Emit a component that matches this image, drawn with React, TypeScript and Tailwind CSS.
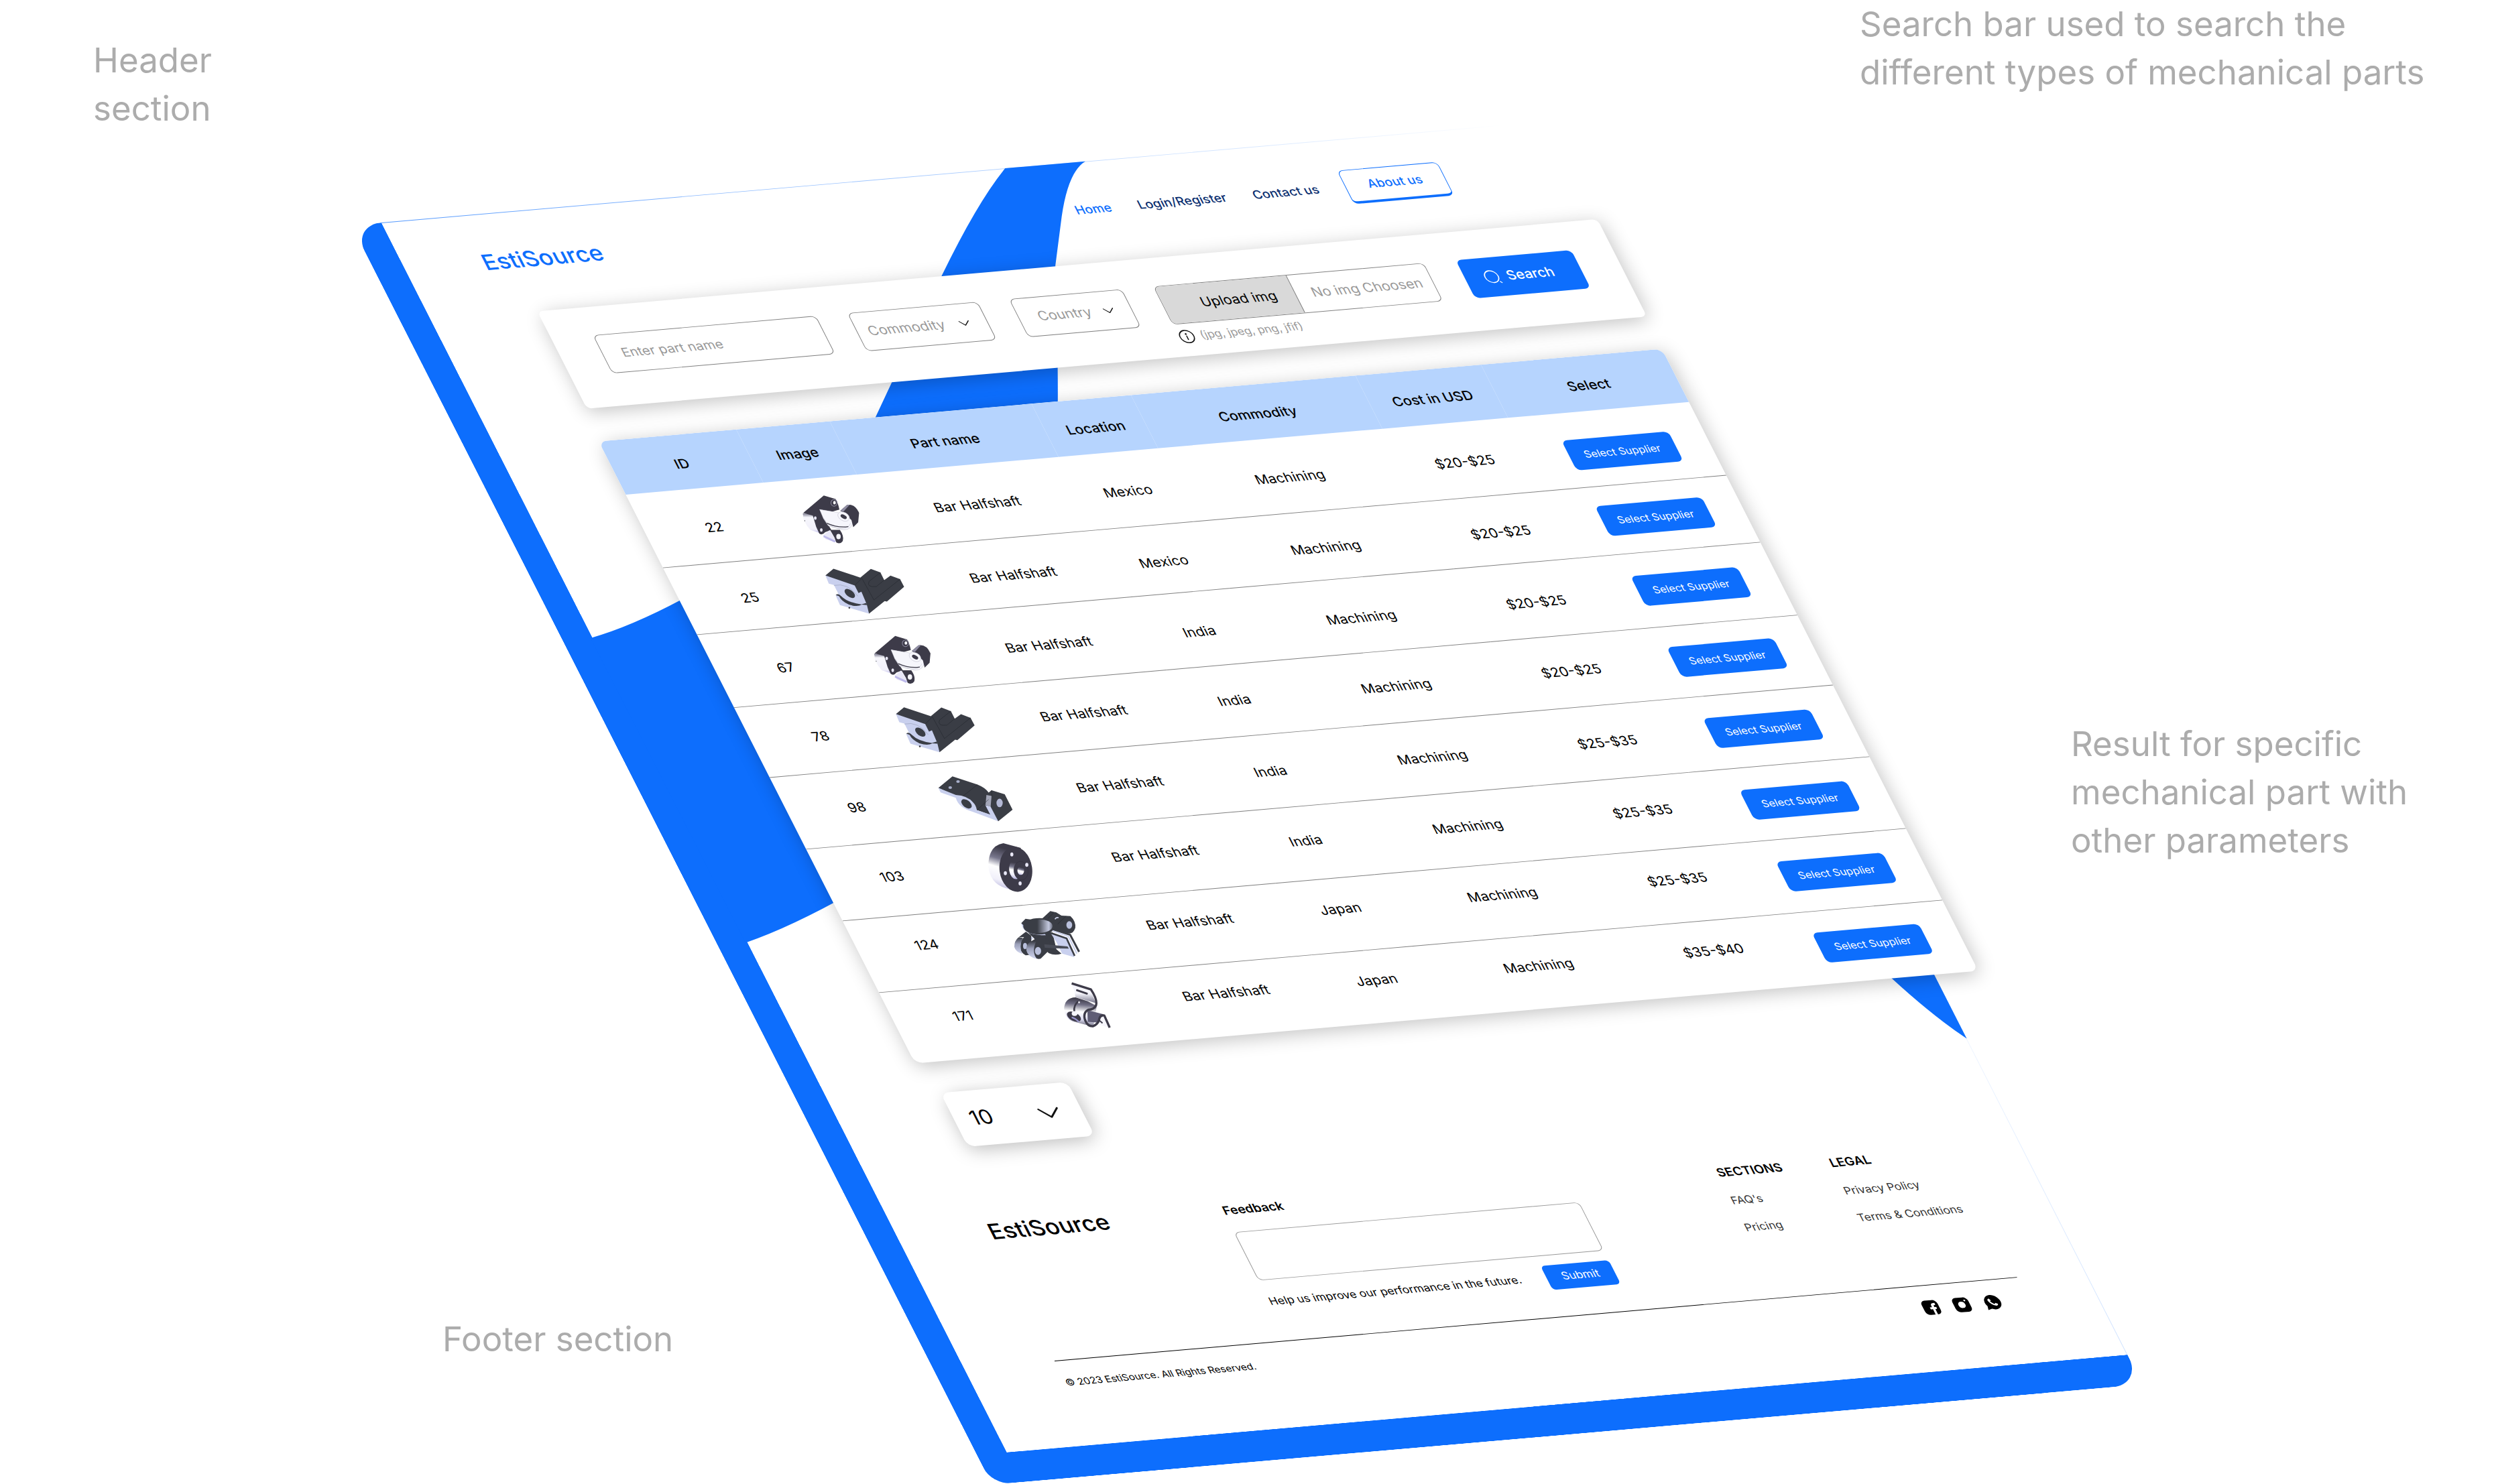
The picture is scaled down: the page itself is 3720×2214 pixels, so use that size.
import React from "react";

const INK = "#3a3d45";
const INK_WARM = "#3d3b49";
const PALE = "#c9d0ee";

function PartFrame({ viewBox, children }: { viewBox: string; children: React.ReactNode }) {
  return (
    <svg
      viewBox={viewBox}
      aria-hidden="true"
      className="mx-auto block size-[90px] overflow-visible [transform:matrix(0.9613,0.0935,-0.4888,1.0743,0,0)]"
    >
      {children}
    </svg>
  );
}

function HingeClamp({ id }: { id: string }) {
  return (
    <PartFrame viewBox="44 25 270 270">
      <defs>
        <linearGradient id={id} x1="0" y1="0" x2="0" y2="1">
          <stop offset="0" stopColor="#77768c" />
          <stop offset="0.2" stopColor="#f7f7fc" />
          <stop offset="0.8" stopColor="#f1f0fa" />
          <stop offset="1" stopColor="#bdb9ea" />
        </linearGradient>
      </defs>
      <path d="M58 142 L104 146 L118 200 L140 232 L92 216 L76 196 L62 170Z" fill={`url(#${id})`} />
      <path d="M60 140 L152 62 L205 78 Q215 92 222 125 L190 134 L133 124 L168 188 L186 216 L158 226 Q146 242 132 232 L118 202 L103 152Z" fill={INK_WARM} />
      <path d="M133 124 L215 138 L283 172 Q282 216 240 216 L172 198 L150 165Z" fill="#f6f6fc" stroke="#a5a4b5" strokeWidth="1" />
      <path d="M152 164 Q170 204 218 210 Q262 214 272 186" fill="none" stroke="#a5a4b5" strokeWidth="1" />
      <path d="M166 186 Q215 208 262 201" fill="none" stroke={INK_WARM} strokeWidth="4" />
      <path d="M226 130 L256 104 Q292 98 310 140 L306 182 L284 204 L276 172 L250 145Z" fill={INK_WARM} />
      <path d="M226 130 L256 104 L268 103 L240 134Z" fill="#8f8da3" />
      <ellipse cx="241" cy="156" rx="28" ry="19" transform="rotate(28 241 156)" fill="#f6f6fc" stroke="#a5a4b5" />
      <ellipse cx="241" cy="157" rx="15" ry="8" transform="rotate(28 241 157)" fill={INK_WARM} />
      <path d="M150 240 L178 217 L212 272 L160 258Z" fill="#e9e8f8" />
      <path d="M150 248 L200 272 L206 265 L152 240Z" fill="#bdb9ea" />
      <path d="M180 216 L224 216 Q244 244 237 266 Q226 282 208 272 L200 250Z" fill={INK_WARM} />
      <ellipse cx="218" cy="246" rx="10" ry="12" fill="#f6f6fc" />
      <ellipse cx="198" cy="95" rx="14" ry="15" fill="none" stroke="#8f8da3" strokeWidth="3" />
      <ellipse cx="200" cy="94" rx="6" ry="8" fill="#f6f6fc" />
      <ellipse cx="114" cy="163" rx="6" ry="8" fill="#e9e8f8" />
      <ellipse cx="141" cy="216" rx="6" ry="8" fill="#e9e8f8" />
      <circle cx="67" cy="175" r="2" fill={INK} />
    </PartFrame>
  );
}

function BracketBlock() {
  return (
    <PartFrame viewBox="202 336 270 270">
      <path d="M157 415 L193 385 L313 425 L360 386 L403 402 L420 436 L448 416 L491 432 L509 466 L432 532 L422 530 L352 586 L330 540Z" fill={INK} />
      <path d="M157 415 L288 460 L305 494 L318 488 L342 545 L352 586 L222 548 L203 505 L215 498 L195 458 L172 452Z" fill={PALE} />
      <path d="M195 460 Q255 446 302 508" fill="none" stroke="#8d93ab" strokeWidth="1.5" />
      <ellipse cx="266" cy="496" rx="27" ry="15" transform="rotate(38 266 496)" fill={INK} />
      <path d="M203 503 Q214 494 228 508 Q255 536 318 545 L340 538 L343 548 L320 546 Q300 558 262 546 Q228 530 218 508Z" fill={INK} />
      <circle cx="264" cy="560" r="4" fill={INK} />
      <path d="M290 458 L320 428 L374 525 L491 432 M403 402 L352 442 Q340 470 385 465 L420 436" fill="none" stroke="#1f2228" strokeWidth="1.5" />
    </PartFrame>
  );
}

function LinkArm() {
  return (
    <PartFrame viewBox="77 9 270 270">
      <path d="M60 101 L123 49 L235 86 Q270 100 285 122 L298 111 L357 129 L392 198 L328 250 L295 222 L232 200 Q200 140 140 138Z" fill={INK} />
      <path d="M60 101 L138 132 Q190 135 215 165 Q230 180 232 200 L292 220 L270 178 L293 183 L328 250 L215 208 Q150 190 138 145 L70 121Z" fill={PALE} />
      <ellipse cx="186" cy="172" rx="27" ry="16" transform="rotate(38 186 172)" fill={INK} />
      <path d="M275 132 L298 137 L294 184 L271 177Z" fill="#a3a6b8" />
      <path d="M235 86 L172 136 M285 152 L232 200 M298 111 L300 137" fill="none" stroke="#1f2228" strokeWidth="1.5" />
      <ellipse cx="334" cy="168" rx="14" ry="19" fill="#b4b9d6" />
      <ellipse cx="148" cy="72" rx="8" ry="6" fill="#aab0cc" />
      <ellipse cx="113" cy="99" rx="8" ry="6" fill="#aab0cc" />
    </PartFrame>
  );
}

function FlangeDisc() {
  return (
    <PartFrame viewBox="236 322 270 270">
      <defs>
        <linearGradient id="disc-side" x1="0.2" y1="0" x2="0" y2="1">
          <stop offset="0.05" stopColor="#3d3b49" />
          <stop offset="0.28" stopColor="#77768c" />
          <stop offset="0.45" stopColor="#ffffff" />
          <stop offset="0.7" stopColor="#f1f0fa" />
          <stop offset="1" stopColor="#9a97cf" />
        </linearGradient>
      </defs>
      <path d="M352 351 Q286 362 285 450 Q290 530 362 552 L415 568 L430 372Z" fill="url(#disc-side)" />
      <ellipse cx="408" cy="468" rx="73" ry="101" transform="rotate(-8 408 468)" fill={INK_WARM} />
      <ellipse cx="405" cy="470" rx="27" ry="42" transform="rotate(-8 405 470)" fill="url(#disc-side)" />
      <ellipse cx="431" cy="474" rx="32" ry="42" transform="rotate(-8 431 474)" fill={INK_WARM} stroke="#2a2933" />
      <ellipse cx="430" cy="474" rx="15" ry="19" fill="url(#disc-side)" />
      <ellipse cx="390" cy="401" rx="7" ry="9" fill="#e9e8f8" />
      <ellipse cx="457" cy="448" rx="7" ry="9" fill="#e9e8f8" />
      <ellipse cx="361" cy="485" rx="7" ry="9" fill="#e9e8f8" />
      <ellipse cx="427" cy="531" rx="7" ry="9" fill="#e9e8f8" />
    </PartFrame>
  );
}

function KnuckleBowl() {
  return (
    <PartFrame viewBox="64 2 270 270">
      <defs>
        <linearGradient id="bowl" x1="0" y1="0" x2="1" y2="0">
          <stop offset="0.4" stopColor="#3a3d45" />
          <stop offset="0.85" stopColor="#c3c8de" />
          <stop offset="1" stopColor="#6b6f80" />
        </linearGradient>
        <linearGradient id="lug" x1="0" y1="0" x2="0" y2="1">
          <stop offset="0" stopColor="#3a3d45" />
          <stop offset="0.4" stopColor="#9a9fb8" />
          <stop offset="1" stopColor="#d5daf3" />
        </linearGradient>
      </defs>
      <path d="M200 62 L235 30 L262 36 L285 50 L325 52 Q350 75 347 105 Q338 132 318 130 L240 112Z" fill={INK} />
      <path d="M256 66 Q262 56 272 60" fill="none" stroke="#d5daf3" strokeWidth="5" />
      <path d="M268 88 L306 52 M225 62 L250 38" stroke="#1f2228" strokeWidth="1.5" />
      <ellipse cx="320" cy="92" rx="13" ry="17" fill="#b9c0dc" />
      <path d="M130 120 L245 125 L262 200 L285 220 Q255 230 228 218Z" fill={INK} />
      <path d="M140 145 L160 148 L150 160Z" fill={PALE} />
      <path d="M92 148 L126 122 L150 140 L150 225 L125 228 Q98 215 100 180 Q103 160 118 146Z" fill={INK} />
      <path d="M92 148 Q74 162 74 190 Q80 212 110 222 Q94 190 112 150Z" fill="url(#lug)" />
      <ellipse cx="122" cy="186" rx="9" ry="14" fill="#b9c0dc" />
      <path d="M150 165 L195 138 L232 165 L230 205 L192 243 Q160 250 157 210 Z" fill={INK} />
      <path d="M150 165 Q126 175 128 206 Q134 234 176 245 Q150 215 172 165Z" fill="url(#lug)" />
      <ellipse cx="180" cy="208" rx="14" ry="18" fill="#b9c0dc" />
      <path d="M105 84 L112 104 Q130 138 215 138 L210 130Z" fill={PALE} />
      <path d="M105 84 L124 64 L150 68 L150 100 L118 96Z" fill={INK} />
      <ellipse cx="186" cy="98" rx="72" ry="37" fill={INK} />
      <ellipse cx="188" cy="97" rx="57" ry="30" fill="url(#bowl)" />
      <path d="M238 130 L312 150 L343 236 L288 220 L262 168Z" fill={PALE} />
      <path d="M248 112 L324 136 L364 212" fill="none" stroke={INK} strokeWidth="9" />
      <path d="M244 118 L316 143 L354 220" fill="none" stroke={PALE} strokeWidth="6" />
      <path d="M238 128 L308 152 L344 230" fill="none" stroke={INK} strokeWidth="8" />
      <path d="M208 178 L312 188 L318 198 L250 196 L210 194Z" fill="#4a4d57" />
    </PartFrame>
  );
}

function PipeClip() {
  return (
    <PartFrame viewBox="223 315 270 270">
      <defs>
        <linearGradient id="clip" x1="0.1" y1="0" x2="0" y2="1">
          <stop offset="0" stopColor="#3d3b49" />
          <stop offset="0.2" stopColor="#6e6c82" />
          <stop offset="0.45" stopColor="#ffffff" />
          <stop offset="0.7" stopColor="#dddcf2" />
          <stop offset="1" stopColor="#3d3b49" />
        </linearGradient>
        <linearGradient id="clip-plate" x1="0" y1="0" x2="0" y2="1">
          <stop offset="0.5" stopColor="#f6f6fc" />
          <stop offset="1" stopColor="#77768c" />
        </linearGradient>
      </defs>
      <path d="M326 350 L412 378 L436 436 L345 410 L340 382Z" fill="url(#clip-plate)" />
      <path d="M352 379 L396 394" stroke={INK_WARM} strokeWidth="9" strokeLinecap="round" />
      <path d="M345 411 Q298 412 294 460 Q298 510 340 520 L425 542 L440 450 L400 428Z" fill="url(#clip)" />
      <path d="M398 468 L468 486 L462 525 L400 520Z" fill="#5f5d75" />
      <path d="M454 500 L480 496 L498 548 L450 532Z" fill="#f6f6fc" />
      <path d="M328 348 L414 375 Q444 420 437 446 Q428 466 402 466 Q380 478 386 506 Q396 542 424 540 Q448 530 452 505 Q458 488 474 492 L498 546" fill="none" stroke={INK_WARM} strokeWidth="10" strokeLinejoin="round" />
      <path d="M357 428 Q335 448 340 474" fill="none" stroke={INK_WARM} strokeWidth="8" />
      <ellipse cx="338" cy="497" rx="34" ry="19" transform="rotate(28 338 497)" fill={INK_WARM} />
      <ellipse cx="341" cy="483" rx="13" ry="11" fill="#f6f6fc" />
      <path d="M328 500 Q345 505 360 520" fill="none" stroke="#9a97cf" strokeWidth="6" />
      <circle cx="361" cy="433" r="4" fill="#f6f6fc" />
      <path d="M452 514 L466 526" stroke={INK_WARM} strokeWidth="6" />
    </PartFrame>
  );
}

function Chevron({ className }: { className: string }) {
  return (
    <svg viewBox="0 0 16 9" fill="none" stroke="#111" aria-hidden="true" className={className}>
      <path d="M1 1 L8 8 L15 1" strokeWidth="1.3" strokeLinecap="round" strokeLinejoin="round" />
    </svg>
  );
}

type Row = {
  id: string;
  place: string;
  cost: string;
  height: string;
  cell: string;
  part: React.ReactNode;
};

const rows: Row[] = [
  { id: "22", place: "Mexico", cost: "$20-$25", height: "h-[123px]", cell: "pt-2", part: <HingeClamp id="clamp-a" /> },
  { id: "25", place: "Mexico", cost: "$20-$25", height: "h-[112px]", cell: "pt-2", part: <BracketBlock /> },
  { id: "67", place: "India", cost: "$20-$25", height: "h-[122px]", cell: "pt-2", part: <HingeClamp id="clamp-b" /> },
  { id: "78", place: "India", cost: "$20-$25", height: "h-[117px]", cell: "", part: <BracketBlock /> },
  { id: "98", place: "India", cost: "$25-$35", height: "h-[120px]", cell: "", part: <LinkArm /> },
  { id: "103", place: "India", cost: "$25-$35", height: "h-[120px]", cell: "pb-2", part: <FlangeDisc /> },
  { id: "124", place: "Japan", cost: "$25-$35", height: "h-[120px]", cell: "pb-5", part: <KnuckleBowl /> },
  { id: "171", place: "Japan", cost: "$35-$40", height: "h-[118px]", cell: "pb-5", part: <PipeClip /> },
];

const headings = ["ID", "Image", "Part name", "Location", "Commodity", "Cost in USD"];

function Swoosh() {
  return (
    <svg
      viewBox="0 0 1678 2058"
      preserveAspectRatio="none"
      fill="#0d6efd"
      aria-hidden="true"
      className="absolute inset-0 size-full overflow-visible"
    >
      <path d="M934 0 Q870 50 765 163 L540 410 L826 410 Q866 325 935 163 L980 85 Q1022 14 1054 0Z" />
      <path d="M-3 695 Q76 680 200 628 L200 1134 Q76 1186 -3 1205Z" />
      <path d="M1540 1230 L1678 1230 L1678 1529 Q1638 1478 1600 1390Z" />
    </svg>
  );
}

function SiteHeader() {
  return (
    <header className="flex h-[164px] items-start pt-[50px] pr-[120px] pl-[116px]">
      <div className="flex h-14 flex-1 items-center justify-between">
        <a href="#home" className="text-[35px] leading-none font-medium text-[#0d6efd]">
          EstiSource
        </a>
        <nav className="flex items-center gap-10 text-[19px] font-medium text-[#0b2f70]">
          <a href="#home" className="text-[#0d6efd]">
            Home
          </a>
          <a href="#login">Login/Register</a>
          <a href="#contact">Contact us</a>
          <a
            href="#about"
            className="flex h-14 w-[150px] items-center justify-center rounded-lg border border-b-4 border-[#0d6efd] bg-white text-[#0d6efd]"
          >
            About us
          </a>
        </nav>
      </div>
    </header>
  );
}

function FilterSelect({ label, width, inset }: { label: string; width: string; inset: string }) {
  return (
    <div className={`relative ${width}`}>
      <select
        aria-label={label}
        className={`h-16 w-full appearance-none rounded-lg border border-[#808080] bg-white text-[21px] text-[#999] ${inset}`}
      >
        <option>{label}</option>
      </select>
      <Chevron className="pointer-events-none absolute top-7 right-[26px] w-4" />
    </div>
  );
}

function SearchCard() {
  return (
    <form className="mr-[-68px] ml-[159px] flex h-[163px] items-start rounded-lg bg-white pt-[46px] pr-[60px] pl-[62px] shadow-[2px_6px_28px_rgba(0,0,0,0.24)]">
      <div className="flex gap-[47px]">
        <input
          type="text"
          aria-label="Part name"
          placeholder="Enter part name"
          className="h-16 w-[334px] rounded-lg border border-[#808080] bg-white px-7 text-[20px] placeholder:text-[#999]"
        />
        <FilterSelect label="Commodity" width="w-[195px]" inset="pl-4" />
        <FilterSelect label="Country" width="w-[169px]" inset="pl-7" />
        <div className="w-[405px]">
          <label
            htmlFor="part-image"
            className="flex h-16 overflow-hidden rounded-lg border border-[#808080] bg-white text-[21px]"
          >
            <span className="flex w-[198px] items-center justify-end border-r border-[#808080] bg-[#d9d9d9] pr-7 text-black">
              Upload img
            </span>
            <span className="flex items-center pl-6 text-[#999]">No img Choosen</span>
          </label>
          <input id="part-image" type="file" className="sr-only" />
          <p className="mt-2 flex items-center gap-2 text-[17px] text-[#999]">
            <svg viewBox="0 0 24 24" fill="none" stroke="#111" strokeWidth="1.6" aria-hidden="true" className="size-6">
              <circle cx="12" cy="12" r="10.2" />
              <path d="M12 11v6" strokeLinecap="round" />
              <circle cx="12" cy="7.8" r="0.6" fill="#111" />
            </svg>
            (jpg, jpeg, png, jfif)
          </p>
        </div>
      </div>
      <button
        type="submit"
        className="ml-auto flex h-16 w-[173px] items-center gap-2.5 rounded-lg bg-[#0d6efd] pl-7 text-[21px] font-medium text-white"
      >
        <svg viewBox="0 0 24 24" fill="none" stroke="currentColor" strokeWidth="1.5" aria-hidden="true" className="size-6">
          <circle cx="11.5" cy="11.5" r="9.8" />
          <path d="M20.5 20.5 L22.3 22.3" strokeLinecap="round" />
        </svg>
        Search
      </button>
    </form>
  );
}

function PartsTable() {
  return (
    <div className="mt-[54px] mr-[-66px] ml-[152px] rounded-xl bg-white shadow-[2px_6px_28px_rgba(0,0,0,0.24)]">
      <table className="w-full table-fixed border-separate border-spacing-0 overflow-hidden rounded-xl text-center text-[21px] text-black">
        <colgroup>
          <col className="w-[206px]" />
          <col className="w-[140px]" />
          <col className="w-[302px]" />
          <col className="w-[149px]" />
          <col className="w-[336px]" />
          <col className="w-[188px]" />
          <col />
        </colgroup>
        <thead className="bg-[#b6d4fe]">
          <tr className="h-[89px]">
            {headings.map((h) => (
              <th key={h} scope="col" className="p-0 pt-1.5 font-medium whitespace-nowrap">
                {h}
              </th>
            ))}
            <th scope="col" className="p-0 pt-1.5 pl-2 font-medium">
              Select
            </th>
          </tr>
        </thead>
        <tbody className="[&>tr:not(:last-child)>td]:border-b [&>tr:not(:last-child)>td]:border-[#808080]">
          {rows.map((r, i) => (
            <tr key={r.id} className={r.height}>
              <td className={`px-0 ${r.cell || "py-0"}`}>{r.id}</td>
              <td className={`px-0 ${r.cell || "py-0"}`}>{r.part}</td>
              <td className={`px-0 ${r.cell || "py-0"}`}>Bar Halfshaft</td>
              <td className={`px-0 ${r.cell || "py-0"}`}>{r.place}</td>
              <td className={`px-0 ${r.cell || "py-0"}`}>Machining</td>
              <td className={`px-0 ${r.cell || "py-0"}`}>{r.cost}</td>
              <td className={i === 0 ? "p-0 pt-4 pl-2" : "p-0 pl-2"}>
                <button
                  type="button"
                  className="h-[50px] w-40 rounded-lg bg-[#0d6efd] align-middle text-[16px] text-white"
                >
                  Select Supplier
                </button>
              </td>
            </tr>
          ))}
        </tbody>
      </table>
    </div>
  );
}

function PageSize() {
  return (
    <div className="relative mt-[51px] ml-[167px] w-[190px]">
      <select
        aria-label="Rows per page"
        className="block h-[90px] w-full appearance-none rounded-xl bg-white pl-6 text-[32px] text-black shadow-[2px_6px_28px_rgba(0,0,0,0.26)]"
      >
        <option>10</option>
      </select>
      <Chevron className="pointer-events-none absolute top-[38px] right-8 w-8" />
    </div>
  );
}

function SocialLinks() {
  return (
    <div className="flex gap-5">
      <a href="#facebook" aria-label="Facebook">
        <svg viewBox="0 0 24 24" className="size-[26px]" aria-hidden="true">
          <rect x="1" y="1" width="22" height="22" rx="6" />
          <path
            d="M13.2 23.5 V14.8 H10.2 V11.6 H13.2 V9.6 C13.2 7 14.8 5.6 17.2 5.6 H19.2 V8.6 H17.8 C16.9 8.6 16.5 9 16.5 9.9 V11.6 H19.2 L18.8 14.8 H16.5 V23.5Z"
            fill="#fff"
          />
        </svg>
      </a>
      <a href="#instagram" aria-label="Instagram">
        <svg viewBox="0 0 24 24" className="size-[26px]" aria-hidden="true">
          <rect x="1" y="1" width="22" height="22" rx="6" />
          <circle cx="12" cy="12" r="4.8" fill="#fff" />
          <circle cx="18" cy="5.8" r="1.3" fill="#fff" />
        </svg>
      </a>
      <a href="#whatsapp" aria-label="WhatsApp">
        <svg viewBox="0 0 24 24" className="size-[26px]" aria-hidden="true">
          <path d="M12 1 A11 11 0 1 1 6.8 21.7 L1.2 23 L2.5 17.4 A11 11 0 0 1 12 1Z" />
          <path
            d="M8.3 6.3 C6.6 6.9 6 8.4 6.5 10 C7.6 13.6 10.4 16.4 14 17.5 C15.6 18 17.1 17.3 17.7 15.7 L17.7 14.9 L14.9 13.4 L13.5 14.9 C11.6 14.1 9.9 12.4 9.1 10.5 L10.6 9.1 L9.1 6.3Z"
            fill="#fff"
          />
        </svg>
      </a>
    </div>
  );
}

function LinkColumn({ title, links }: { title: string; links: string[] }) {
  return (
    <div className="pt-2">
      <h3 className="text-[19px] leading-6 font-semibold text-black">{title}</h3>
      <ul className="mt-[22px] flex flex-col gap-[21px] text-[17px] leading-6 text-[#333]">
        {links.map((l) => (
          <li key={l}>
            <a href="#footer">{l}</a>
          </li>
        ))}
      </ul>
    </div>
  );
}

function SiteFooter() {
  return (
    <footer className="mt-[127px] mr-[102px] ml-[135px] text-black">
      <div className="flex h-[229px] items-start border-b border-black">
        <a href="#home" className="w-[351px] text-[35px] leading-6 font-medium">
          EstiSource
        </a>
        <form className="w-[517px]">
          <label htmlFor="feedback" className="block text-[19px] leading-6 font-semibold">
            Feedback
          </label>
          <textarea
            id="feedback"
            className="mt-[23px] block h-[81px] w-full resize-none rounded-lg border border-[#999] bg-white"
          />
          <div className="mt-4 flex items-center justify-between">
            <p className="text-[17px] whitespace-nowrap">Help us improve our performance in the future.</p>
            <button
              type="submit"
              className="h-10 w-[102px] rounded-md bg-[#0d6efd] text-[17px] text-white"
            >
              Submit
            </button>
          </div>
        </form>
        <div className="ml-auto flex w-[354px]">
          <div className="w-[169px]">
            <LinkColumn title="SECTIONS" links={["FAQ's", "Pricing"]} />
          </div>
          <LinkColumn title="LEGAL" links={["Privacy Policy", "Terms & Conditions"]} />
        </div>
      </div>
      <div className="mt-5 flex h-8 items-center justify-between pr-10">
        <p className="text-[15px]">© 2023 EstiSource. All Rights Reserved.</p>
        <SocialLinks />
      </div>
    </footer>
  );
}

export default function App() {
  return (
    <main className="relative h-screen w-full overflow-hidden bg-white pt-[336px] pl-[524px] font-['Inter',sans-serif]">
      <div className="w-[1723px] origin-top-left rounded-tl-[45px] rounded-br-[45px] rounded-bl-[28px] border-b-[50px] border-l-[45px] border-[#0d6efd] bg-white [transform:matrix(0.9962,-0.0867,0.4533,0.8914,0,0)]">
        <div className="relative h-[2058px]">
          <Swoosh />
          <div className="absolute inset-x-0 top-0 h-px bg-linear-to-r from-[#0d6efd]/70 to-[#0d6efd]/0" />
          <div className="absolute inset-y-0 right-0 w-px bg-linear-to-b from-[#0d6efd]/0 from-60% to-[#0d6efd]/20" />
          <div className="relative">
            <SiteHeader />
            <SearchCard />
            <PartsTable />
            <PageSize />
            <SiteFooter />
          </div>
        </div>
      </div>

      <p className="absolute top-[54px] left-[139px] text-[51px] leading-[72px] text-[#acacac]">
        Header
        <br />
        section
      </p>
      <p className="absolute top-0 left-[2774px] text-[51px] leading-[72px] whitespace-nowrap text-[#acacac]">
        Search bar used to search the
        <br />
        different types of mechanical parts
      </p>
      <p className="absolute top-[1074px] left-[3089px] text-[51px] leading-[72px] whitespace-nowrap text-[#acacac]">
        Result for specific
        <br />
        mechanical part with
        <br />
        other parameters
      </p>
      <p className="absolute top-[1962px] left-[660px] text-[51px] leading-[72px] text-[#acacac]">
        Footer section
      </p>
    </main>
  );
}
